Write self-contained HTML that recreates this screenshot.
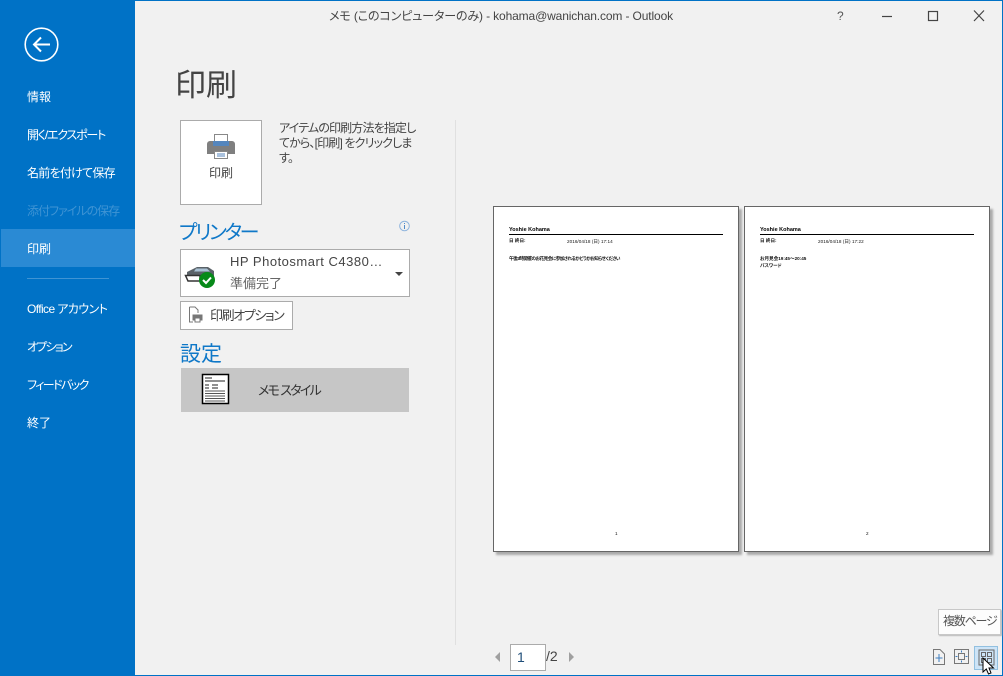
<!DOCTYPE html>
<html lang="ja"><head><meta charset="utf-8"><style>
html,body{margin:0;padding:0}
body{width:1003px;height:676px;overflow:hidden;position:relative;background:#f1f1f1;font-family:"Liberation Sans","Noto Sans CJK JP",sans-serif;color:#444;font-feature-settings:"palt"}
.a{position:absolute;white-space:nowrap}
.m{position:absolute;left:27px;color:#fff;font-size:12px;line-height:18px;white-space:nowrap}
.pg{position:absolute;background:#fff;border:1px solid #666;box-shadow:3px 3px 2px #aaa;width:244px;height:344px;top:206px}
.pg div{position:absolute;white-space:nowrap;color:#111}
.b{font-weight:bold;font-size:5.5px;line-height:6px;left:15px;top:20px;color:#000!important;filter:blur(.25px)}
.l{left:15px;top:27px;width:214px;height:1px;background:#000}
.s{font-size:4.6px;line-height:5px;filter:blur(.25px)}
</style></head><body>
<div class="a" style="left:0;top:0;width:1003px;height:1px;background:#0072c6"></div>
<div class="a" style="left:0;top:675px;width:1003px;height:1px;background:#0072c6"></div>
<div class="a" style="left:1002px;top:0;width:1px;height:676px;background:#0072c6"></div>
<div class="a" style="left:0;top:0;width:135px;height:676px;background:#0072c6"></div>
<svg class="a" style="left:24px;top:27px" width="35" height="35" viewBox="0 0 35 35" fill="none" stroke="#fff"><circle cx="17.5" cy="17.5" r="16.3" stroke-width="1.6"/><path d="M10 17.5H26M17 10.5L10 17.5L17 24.5" stroke-width="2"/></svg>
<div class="m" style="top:88px">情報</div>
<div class="m" style="top:126px;letter-spacing:-1.2px">開く/エクスポート</div>
<div class="m" style="top:164px;letter-spacing:-.75px">名前を付けて保存</div>
<div class="m" style="top:202px;color:#3f94d4;letter-spacing:-1px">添付ファイルの保存</div>
<div class="a" style="left:1px;top:229px;width:134px;height:38px;background:#2a8ad4"></div>
<div class="m" style="top:240px">印刷</div>
<div class="a" style="left:27px;top:278px;width:82px;height:1px;background:#3f94d4"></div>
<div class="m" style="top:300px;letter-spacing:-.6px">Office アカウント</div>
<div class="m" style="top:338px;letter-spacing:-1.800px">オプション</div>
<div class="m" style="top:376px;letter-spacing:-1.600px">フィードバック</div>
<div class="m" style="top:414px">終了</div>

<div class="a" style="left:135px;width:732px;top:8px;text-align:center;font-size:12px;line-height:17px;color:#444;letter-spacing:-.13px">メモ (このコンピューターのみ) - kohama@wanichan.com - Outlook</div>
<div class="a" style="left:837px;top:8px;font-size:12px;line-height:17px;color:#555">?</div>
<svg class="a" style="left:880px;top:8px" width="110" height="16" fill="none" stroke="#444"><path d="M2 8.5H12" stroke-width="1.2"/><rect x="48.5" y="3.5" width="9" height="9" stroke-width="1.2"/><path d="M94 2.5L104 13M104 2.5L94 13" stroke-width="1.2"/></svg>

<div class="a" style="left:175px;top:65px;font-size:31px;line-height:42px;color:#444">印刷</div>
<div class="a" style="left:180px;top:120px;width:80px;height:83px;background:#fff;border:1px solid #ababab"></div>
<svg class="a" style="left:206px;top:133px" width="30" height="27" viewBox="0 0 30 27"><rect x="8.500" y="1.500" width="13" height="8" fill="#fff" stroke="#888"/><path d="M1 11a3 3 0 0 1 3-3h22a3 3 0 0 1 3 3v10H1z" fill="#7f7f7f"/><rect x="7" y="8" width="16" height="5" fill="#5586bd"/><rect x="8.500" y="18.500" width="13" height="7" fill="#fff" stroke="#888"/><path d="M11 21H19M11 23H19" stroke="#5586bd"/></svg>
<div class="a" style="left:209px;top:165px;font-size:12px;line-height:17px;color:#444">印刷</div>
<div class="a" style="left:279px;top:121px;font-size:12px;line-height:15px;color:#444;letter-spacing:-.85px">アイテムの印刷方法を指定し<br>てから、[印刷] をクリックしま<br>す。</div>

<div class="a" style="left:179px;top:220px;font-size:20px;line-height:26px;color:#0f78c8;letter-spacing:-2.300px">プリンター</div>
<svg class="a" style="left:399px;top:220px" width="12" height="12" fill="none"><circle cx="5.500" cy="6" r="4.800" stroke="#8fb4dd"/><path d="M5.500 5V9M5.500 3V4" stroke="#4f8bc9"/></svg>
<div class="a" style="left:180px;top:249px;width:228px;height:46px;background:#fff;border:1px solid #ababab"></div>
<svg class="a" style="left:184px;top:264px" width="34" height="26" viewBox="0 0 34 26"><path d="M3 8L13 3H24L30 7V13H3z" fill="#5a6268"/><path d="M12 4.500L23 4.500L26 7.500H10z" fill="#a9c1d4"/><path d="M1.500 11.500H16V17H4z" fill="#fff" stroke="#333" stroke-width="1.500"/><circle cx="23" cy="16" r="8" fill="#078a19"/><path d="M19 16L22 19L27 13.500" stroke="#fff" stroke-width="2" fill="none"/></svg>
<div class="a" style="left:230px;top:253px;font-size:13px;line-height:18px;letter-spacing:.5px;color:#444">HP Photosmart C4380…</div>
<div class="a" style="left:230px;top:275px;font-size:13px;line-height:18px;color:#666">準備完了</div>
<div class="a" style="left:395px;top:272px;width:0;height:0;border-left:4px solid transparent;border-right:4px solid transparent;border-top:4px solid #444"></div>
<div class="a" style="left:180px;top:301px;width:111px;height:27px;background:#fff;border:1px solid #ababab"></div>
<svg class="a" style="left:187px;top:306px" width="18" height="18" viewBox="0 0 18 18" fill="none" stroke="#777"><path d="M2.500 1H8L11 4V7M2.500 1V16H6"/><path d="M6 9H15V14H6z" fill="#777"/><rect x="8" y="12" width="5" height="4" fill="#fff"/></svg>
<div class="a" style="left:210px;top:307px;font-size:13px;line-height:18px;color:#444;letter-spacing:-1.400px">印刷オプション</div>
<div class="a" style="left:180px;top:342px;font-size:21px;line-height:26px;color:#0f78c8">設定</div>
<div class="a" style="left:181px;top:368px;width:228px;height:44px;background:#c6c6c6"></div>
<svg class="a" style="left:201px;top:373px" width="30" height="33" fill="none"><rect x="1.500" y="1.500" width="26" height="29" fill="#fff" stroke="#000" stroke-width="1.500"/><path d="M4 5H11M4 8H24M4 12H8M4 15H8M4 18H8M11 12H17M11 15H17" stroke="#222"/><path d="M4 18H24M4 20.500H24M4 23H24M4 25.500H24M4 28H24" stroke="#555"/></svg>
<div class="a" style="left:258px;top:382px;font-size:13px;line-height:18px;color:#333;letter-spacing:-1.700px">メモ スタイル</div>

<div class="a" style="left:455px;top:120px;width:1px;height:525px;background:#e0e0e0"></div>
<div class="pg" style="left:493px">
<div class="b">Yoshie Kohama</div><div class="l"></div>
<div class="s" style="left:15px;top:31px;font-weight:bold">日 終日:</div>
<div class="s" style="left:73px;top:32px;letter-spacing:.05px">2016/04/18 (日) 17:14</div>
<div class="s" style="left:15px;top:49px;font-weight:bold;letter-spacing:-.5px">午後2時開催のお花見会に参加されるかどうかお知らせください</div>
<div class="s" style="left:121px;top:324px">1</div>
</div>
<div class="pg" style="left:744px">
<div class="b">Yoshie Kohama</div><div class="l"></div>
<div class="s" style="left:15px;top:31px;font-weight:bold">日 終日:</div>
<div class="s" style="left:73px;top:32px;letter-spacing:.05px">2016/04/18 (日) 17:22</div>
<div class="s" style="left:15px;top:49px;font-weight:bold">お月見会19:45〜20:45</div>
<div class="s" style="left:15px;top:56px;font-weight:bold">パスワード</div>
<div class="s" style="left:121px;top:324px">2</div>
</div>

<div class="a" style="left:495px;top:652px;width:0;height:0;border-top:5px solid transparent;border-bottom:5px solid transparent;border-right:5px solid #a0a0a0"></div>
<div class="a" style="left:510px;top:644px;width:34px;height:25px;background:#fff;border:1px solid #ababab"></div>
<div class="a" style="left:517px;top:649px;font-size:14px;line-height:17px;color:#1f4e79">1</div>
<div class="a" style="left:546px;top:648px;font-size:14px;line-height:17px;color:#444">/2</div>
<div class="a" style="left:569px;top:652px;width:0;height:0;border-top:5px solid transparent;border-bottom:5px solid transparent;border-left:5px solid #a0a0a0"></div>

<div class="a" style="left:938px;top:609px;width:61px;height:24px;background:#fdfdfd;border:1px solid #c8c8c8;box-shadow:1px 1px 1px #bbb"></div>
<div class="a" style="left:943px;top:613px;font-size:12px;line-height:17px;color:#555;letter-spacing:-1.200px">複数ページ</div>
<svg class="a" style="left:930px;top:648px" width="18" height="18" fill="none"><path d="M3.500 1.500H10L14.500 6V16.500H3.500z" stroke="#777"/><path d="M9 6V14M5.500 10H12.500" stroke="#3f7fc1"/></svg>
<svg class="a" style="left:953px;top:648px" width="18" height="18" fill="none"><rect x="1.500" y="1.500" width="14" height="14" stroke="#777"/><rect x="5.500" y="5.500" width="6" height="6" stroke="#777"/><path d="M8.500 2.500V4.500M8.500 12.500V14.500M2.500 8.500H4.500M12.500 8.500H14.500" stroke="#3f7fc1"/></svg>
<div class="a" style="left:974px;top:646px;width:22px;height:22px;background:#cde4f7;border:1px solid #92c0e0"></div>
<svg class="a" style="left:978px;top:649px" width="22" height="26" fill="none"><rect x="1" y="1" width="15" height="15" stroke="#666"/><rect x="3.500" y="3.500" width="4" height="4" stroke="#666"/><rect x="9.500" y="3.500" width="4" height="4" stroke="#666"/><rect x="3.500" y="9.500" width="4" height="4" stroke="#666"/><rect x="9.500" y="9.500" width="4" height="4" stroke="#666"/><path d="M5 9V23L8.300 20L10.500 25L13 24L11 19H15.500z" fill="#fff" stroke="#000"/></svg>
</body></html>
